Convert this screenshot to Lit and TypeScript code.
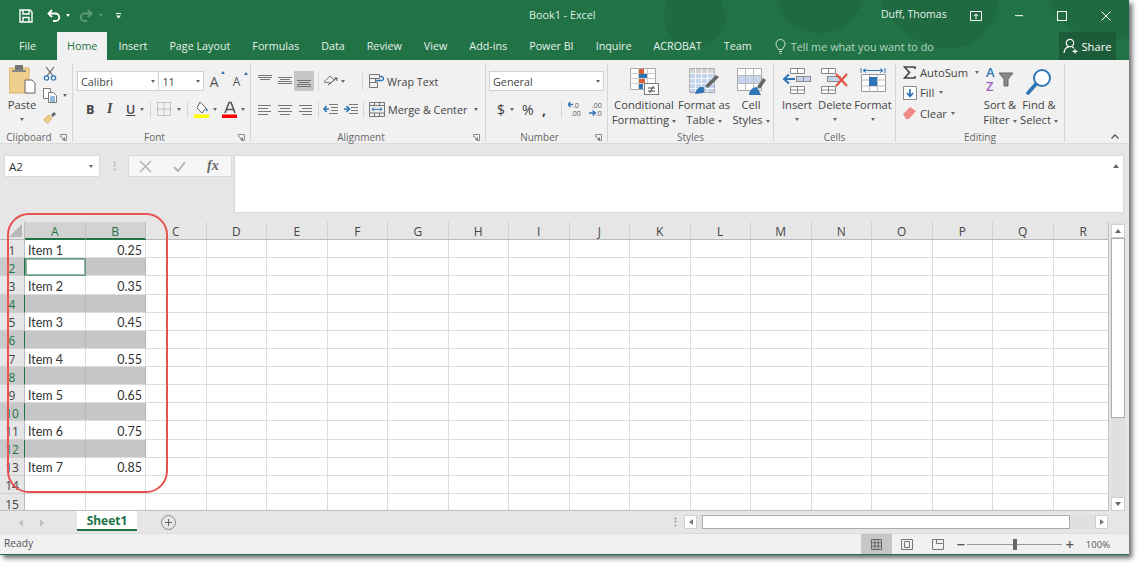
import { LitElement, html, svg, css } from "lit";
import { customElement } from "lit/decorators.js";

const COLS = "ABCDEFGHIJKLMNOPQR".split("");
const ROWS = Array.from({ length: 15 }, (_, i) => i + 1);
const TABS = ["Insert", "Page Layout", "Formulas", "Data", "Review", "View", "Add-ins", "Power BI", "Inquire", "ACROBAT", "Team"];
const VALUES: Record<number, [string, string]> = {
  1: ["Item 1", "0.25"],
  3: ["Item 2", "0.35"],
  5: ["Item 3", "0.45"],
  7: ["Item 4", "0.55"],
  9: ["Item 5", "0.65"],
  11: ["Item 6", "0.75"],
  13: ["Item 7", "0.85"],
};
const isSelected = (r: number) => r % 2 === 0 && r <= 12;

const caret = html`<i class="caret"></i>`;
const launcher = html`<svg class="launcher" width="7" height="7" viewBox="0 0 7 7"><path d="M.5 3V.5H6.5V6.5H3.5" fill="none" stroke="#8a8a8a"/><path d="M1 2.5l3 3M4.5 3.5v2h-2" fill="none" stroke="#666"/></svg>`;

// quick access + window chrome
const icSave = html`<svg width="14" height="14" viewBox="0 0 14 14" fill="none" stroke="#fff" stroke-width="1.4"><path d="M1 1h10l2 2v10H1z"/><path d="M4 1v4h6V1M4 13V8.5h6V13"/></svg>`;
const icUndo = html`<svg width="14" height="13" viewBox="0 0 14 13" fill="none" stroke="#fff" stroke-width="1.8"><path d="M5 1L1.5 4.5 5 8"/><path d="M2 4.5h6.5a3.7 3.7 0 0 1 0 7.5H6"/></svg>`;
const icRedo = html`<svg width="14" height="13" viewBox="0 0 14 13" fill="none" stroke="#5f9a7a" stroke-width="1.8"><path d="M9 1l3.5 3.5L9 8"/><path d="M12 4.5H5.5a3.7 3.7 0 0 0 0 7.5H8"/></svg>`;
const icBulb = html`<svg width="11" height="15" viewBox="0 0 11 15" fill="none" stroke="#cfe3d8"><path d="M3.5 10.5C3 8.5 1 7.5 1 5a4.5 4.5 0 0 1 9 0c0 2.5-2 3.5-2.5 5.5z"/><path d="M4 12.5h3M4.5 14.5h2"/></svg>`;
const icPerson = html`<svg width="16" height="16" viewBox="0 0 16 16" fill="none" stroke="#fff" stroke-width="1.2"><circle cx="7" cy="5" r="3.7"/><path d="M1 15c.3-3.5 2.5-6 5-6.2M9 9c1 .3 1.5.7 2 1.3M12 11v4.5M9.5 13.3h5"/></svg>`;

// clipboard
const icPaste = html`<svg width="27" height="30" viewBox="0 0 27 30"><rect x="0" y="3" width="20" height="25" fill="#f0cf8e" stroke="#d8b36c"/><rect x="6" y="0" width="8" height="6" fill="#777"/><rect x="3" y="5" width="14" height="2" fill="#888"/><path d="M16 15h7l3 3v10H16z" fill="#fff" stroke="#666"/></svg>`;
const icCut = html`<svg width="14" height="15" viewBox="0 0 14 15" fill="none"><path d="M3 1l7 9M11 1L4 10" stroke="#666" stroke-width="1.2"/><circle cx="3.5" cy="12" r="2.2" stroke="#2f75b5" stroke-width="1.2"/><circle cx="10.5" cy="12" r="2.2" stroke="#2f75b5" stroke-width="1.2"/></svg>`;
const icCopy = html`<svg width="14" height="15" viewBox="0 0 14 15" fill="#fff" stroke="#777"><path d="M.5.5h7v10h-7z"/><path d="M5.5 4.5h5l3 3v7h-8z"/><path d="M7 9h5M7 11h5M7 13h5" stroke="#2f75b5"/></svg>`;
const icBrush = html`<svg width="14" height="13" viewBox="0 0 14 13"><path d="M1 8l5-4 3 3-4 5c-2 0-4-2-4-4z" fill="#f0cf8e" stroke="#d8b36c"/><path d="M8 4l3-3 2 2-3 3z" fill="#666"/></svg>`;

// font
const icBorder = html`<svg width="14" height="14" viewBox="0 0 14 14" fill="none" stroke="#999" stroke-dasharray="1 1"><path d="M.5.5h13v13H.5zM7 .5v13M.5 7h13"/></svg>`;
const icFill = html`<svg width="16" height="17" viewBox="0 0 16 17"><path d="M6 1l6 6-4 5-5-5z" fill="#fff" stroke="#666"/><path d="M12 7c1.5 1 2 2 1.8 3.3-1.6 0-2.3-1.3-1.8-3.3z" fill="#2f75b5"/><rect y="13.5" width="15" height="3.5" fill="#ffff00"/></svg>`;
const icColor = html`<svg width="16" height="17" viewBox="0 0 16 17"><path d="M3 12L7 1.5h2L13 12M4.6 8.5h6.8" fill="none" stroke="#555" stroke-width="1.6"/><rect y="13.5" width="15" height="3.5" fill="#f00"/></svg>`;

// alignment
const lines = (rows: [number, number, number][]) => html`<svg width="16" height="14" viewBox="0 0 16 14" stroke="#777">${rows.map(([y, a, b]) => svg`<path d="M${a} ${y + 0.5}H${b}" />`)}</svg>`;
const icTop = lines([[1, 1, 15], [3, 1, 15], [5, 3, 13]]);
const icMid = lines([[3, 1, 15], [5, 3, 13], [7, 1, 15], [9, 1, 15]]);
const icBot = lines([[6, 1, 15], [8, 3, 13], [10, 1, 15], [12, 1, 15]]);
const icLeft = lines([[3, 1, 14], [6, 1, 11], [9, 1, 14], [12, 1, 11]]);
const icCenter = lines([[3, 1, 15], [6, 3, 13], [9, 1, 15], [12, 3, 13]]);
const icRight = lines([[3, 2, 15], [6, 5, 15], [9, 2, 15], [12, 5, 15]]);
const icOrient = html`<svg width="16" height="14" viewBox="0 0 16 14" fill="none"><path d="M1 8l6-6 4 4-3 3z" stroke="#777"/><path d="M5 11l9-7M14 4l-3 0M14 4v3" stroke="#555"/></svg>`;
const icIndL = html`<svg width="15" height="13" viewBox="0 0 15 13" fill="none"><path d="M6 1.5h9M8 4.5h7M8 7.5h7M6 10.5h9" stroke="#777"/><path d="M6 6H1M3.5 3L1 6l2.5 3" stroke="#2f75b5" stroke-width="1.6"/></svg>`;
const icIndR = html`<svg width="15" height="13" viewBox="0 0 15 13" fill="none"><path d="M6 1.5h9M8 4.5h7M8 7.5h7M6 10.5h9" stroke="#777"/><path d="M1 6h5M3.5 3L6.5 6l-3 3" stroke="#2f75b5" stroke-width="1.6"/></svg>`;
const icWrap = html`<svg width="15" height="14" viewBox="0 0 15 14" fill="none" stroke="#777"><path d="M.5.5h10v4H.5zM.5 4.5h6v4h-6zM.5 8.5h8v5h-8z"/><path d="M7 6.5h5.5a1.5 1.5 0 0 0 0-4H11" stroke="#2f75b5" stroke-width="1.3"/></svg>`;
const icMerge = html`<svg width="16" height="15" viewBox="0 0 16 15" fill="none" stroke="#777"><path d="M.5.5h15v14H.5zM5.5.5v3M10.5.5v3M5.5 11v3.5M10.5 11v3.5M.5 3.5h15M.5 11h15"/><path d="M3 7.3h10M5 5.3L3 7.3l2 2M11 5.3l2 2-2 2" stroke="#2f75b5"/></svg>`;

// number
const icDecUp = html`<svg width="13" height="16" viewBox="0 0 13 16"><text x="5" y="6.5" font-size="7" font-family="Open Sans" fill="#555">.0</text><text x="3" y="15" font-size="7" font-family="Open Sans" fill="#555">.00</text><path d="M5 3.5H0M2.5 1L0 3.5 2.5 6" fill="none" stroke="#2f75b5" stroke-width="1.3"/></svg>`;
const icDecDn = html`<svg width="13" height="16" viewBox="0 0 13 16"><text x="3" y="6.5" font-size="7" font-family="Open Sans" fill="#555">.00</text><text x="7" y="15" font-size="7" font-family="Open Sans" fill="#555">.0</text><path d="M0 12h6M3.5 9.5L6.5 12 3.5 14.5" fill="none" stroke="#2f75b5" stroke-width="1.3"/></svg>`;

// styles
const icCond = html`<svg width="29" height="27" viewBox="0 0 29 27"><path d="M.5.5h25v21H.5z" fill="#fff" stroke="#aaa"/><path d="M8.5.5v21M17.5.5v21M.5 5.5h25M.5 10.5h25M.5 15.5h25" stroke="#ccc"/><rect x="9" y="1" width="5" height="5" fill="#d9603b"/><rect x="9" y="6" width="8" height="4" fill="#2f75b5"/><rect x="9" y="11" width="6" height="4" fill="#d9603b"/><rect x="9" y="16" width="4" height="5" fill="#2f75b5"/><rect x="14.5" y="15.5" width="14" height="11" fill="#fff" stroke="#777"/><path d="M18 20h7M18 23h7M23.5 18l-4 7" stroke="#444"/></svg>`;
const icTable = html`<svg width="31" height="27" viewBox="0 0 31 27"><path d="M.5.5h25v24H.5z" fill="#fff" stroke="#aaa"/><rect x="1" y="5" width="24" height="19" fill="#c5d6ec"/><rect x="1" y="1" width="24" height="4" fill="#d5d5d5"/><path d="M6.5.5v24M12.5.5v24M18.5.5v24M.5 5.5h25M.5 10.5h25M.5 15.5h25M.5 20.5h25" stroke="#fff" stroke-opacity=".8"/><path d="M6 26c1-5 5-8 8-7 2 1 2 4 0 6z" fill="#2f75b5"/><path d="M16 18l11-11 3 2-11 11z" fill="#666"/></svg>`;
const icCell = html`<svg width="29" height="27" viewBox="0 0 29 27"><path d="M.5.5h24v22H.5z" fill="#fff" stroke="#aaa"/><rect x="1" y="7" width="23" height="9" fill="#c5d6ec"/><path d="M8.5.5v22M16.5.5v22M.5 7.5h24M.5 15.5h24" stroke="#bbb"/><path d="M12 27c0-5 4-8 8-8l4 8z" fill="#2f75b5"/><path d="M20 19l6-9 3 2-6 9z" fill="#666"/></svg>`;

// cells
const icInsert = html`<svg width="28" height="28" viewBox="0 0 28 28" fill="none"><path d="M7.5 1.5h14v5h-14zM14.5 1.5v5M7.5 19.5h14v7h-14zM14.5 19.5v7M7.5 23h14" fill="#fff" stroke="#888"/><rect x="13.5" y="9.5" width="14" height="5" fill="#c5d6ec" stroke="#888"/><path d="M20.5 9.5v5" stroke="#888"/><path d="M12 12H1M6 7.5L1 12l5 4.5" stroke="#2f75b5" stroke-width="2"/></svg>`;
const icDelete = html`<svg width="28" height="28" viewBox="0 0 28 28" fill="none"><path d="M.5 1.5h14v5H.5zM7.5 1.5v5M.5 19.5h14v7H.5zM7.5 19.5v7M.5 23h14" fill="#fff" stroke="#888"/><rect x="6.5" y="9.5" width="13" height="5" fill="#c5d6ec" stroke="#888"/><path d="M15 7l11 12M26 7L15 19" stroke="#e2533f" stroke-width="2.2"/></svg>`;
const icFormat = html`<svg width="26" height="28" viewBox="0 0 26 28" fill="none"><path d="M1 1v5M25 1v5M3 3.5h20M3 3.5l3-2M3 3.5l3 2M23 3.5l-3-2M23 3.5l-3 2" stroke="#2f75b5"/><path d="M1.5 7.5h24v17h-24z" fill="#fff" stroke="#999"/><path d="M9.5 7.5v17M17.5 7.5v17M1.5 13h24M1.5 19h24" stroke="#bbb"/><rect x="9" y="10" width="8" height="9" fill="#2f75b5"/></svg>`;

// editing
const icSigma = html`<svg width="13" height="13" viewBox="0 0 13 13" fill="none"><path d="M12 3V1H1.5l5 5.5-5 5.5H12v-2" stroke="#444" stroke-width="1.6"/></svg>`;
const icDown = html`<svg width="14" height="14" viewBox="0 0 14 14" fill="#fff"><path d="M.5.5h13v13H.5z" stroke="#888"/><path d="M7 3v6.5M4 7l3 3.5L10 7" fill="none" stroke="#2f75b5" stroke-width="1.7"/></svg>`;
const icEraser = html`<svg width="13" height="12" viewBox="0 0 13 12"><path d="M0 7l7-7 6 4-7 8H3z" fill="#ee8a8a"/></svg>`;
const icSort = html`<svg width="28" height="32" viewBox="0 0 28 32"><text x="0" y="14" font-family="Open Sans" font-size="13" font-weight="600" fill="#2f75b5">A</text><text x="0" y="28" font-family="Open Sans" font-size="13" font-weight="600" fill="#9c5fc0">Z</text><path d="M13 10h14l-5 6v7h-4v-7z" fill="#888" stroke="#666"/></svg>`;
const icFind = html`<svg width="26" height="27" viewBox="0 0 26 27" fill="none"><circle cx="16" cy="10" r="8" stroke="#2f75b5" stroke-width="2" fill="#fff"/><path d="M10 16L2 25" stroke="#2f75b5" stroke-width="3.6" stroke-linecap="round"/></svg>`;

// status bar
const icNormal = html`<svg width="11" height="11" viewBox="0 0 11 11" fill="none" stroke="#666"><path d="M.5.5h10v10H.5zM3.8.5v10M7.2.5v10M.5 3.8h10M.5 7.2h10"/></svg>`;
const icPage = html`<svg width="12" height="11" viewBox="0 0 12 11" fill="none" stroke="#777"><path d="M.5.5h11v10H.5z"/><path d="M3.5 2.5h5v6h-5z"/></svg>`;
const icBreak = html`<svg width="12" height="11" viewBox="0 0 12 11" fill="none" stroke="#777"><path d="M.5.5h11v10H.5zM4.5.5v4h6"/></svg>`;

@customElement("app-root")
export class AppRoot extends LitElement {
  static override styles = css`
    :host {
      display: block;
      position: relative;
      width: 1139px;
      height: 566px;
      overflow: hidden;
      background: #fff;
      font-family: "Open Sans", sans-serif;
      font-size: 11.2px;
      color: #444;
    }
    svg { display: block; flex: none; }
    .win {
      width: 1129px;
      height: 555px;
      display: flex;
      flex-direction: column;
      background: #e6e6e6;
      box-shadow: 3px 3px 5px #666;
      border-bottom: 1px solid #217346;
      box-sizing: border-box;
    }
    .caret {
      display: inline-block;
      flex: none;
      width: 0;
      height: 0;
      border: 2.5px solid transparent;
      border-top: 3px solid #666;
      border-bottom: 0;
    }

    /* title + tabs */
    .head { position: relative; background: #217346; height: 60px; color: #fff; }
    .blobs { position: absolute; left: 0; top: 0; }
    .title { position: relative; height: 31px; display: flex; align-items: center; padding-left: 19px; }
    .title .caret { border-top-color: #fff; }
    .title .dim { border-top-color: #5f9a7a; margin-left: 6px; }
    .doc { position: absolute; left: 529px; top: 7px; font-size: 10.8px; color: #dfece5; }
    .who { position: absolute; left: 881px; top: 7px; font-size: 10.5px; color: #e5f0ea; }
    .win-btns { margin-left: auto; display: flex; align-items: center; padding-right: 18px; gap: 34px; }
    .win-btns .display { margin-right: -4px; }
    .tabs { position: relative; height: 29px; display: flex; align-items: stretch; padding-top: 1px; box-sizing: border-box; font-size: 10.75px; }
    .tab { padding: 0 11px; display: flex; align-items: center; color: #e6f0ea; white-space: nowrap; }
    .tab.file { margin-left: 8px; margin-right: 10px; }
    .tab.home { background: #f1f1f1; color: #217346; padding: 0 10px; }
    .tell { display: flex; align-items: center; gap: 5px; margin-left: 12px; color: #b7d3c4; font-size: 10.9px; }
    .share {
      margin-left: auto;
      margin-right: 13px;
      width: 57px;
      display: flex;
      align-items: center;
      justify-content: center;
      gap: 2px;
      background: #1c5c39;
      color: #fff;
      font-size: 11.2px;
    }

    /* ribbon */
    .ribbon { position: relative; height: 84px; background: #f1f1f1; display: flex; padding-top: 3px; box-sizing: border-box; border-bottom: 1px solid #dcdcdc; }
    .group { position: relative; display: flex; flex-direction: column; border-right: 1px solid #d6d6d6; box-sizing: border-box; height: 79px; flex: none; }
    .body { flex: 1; display: flex; min-height: 0; }
    .lbl { flex: none; height: 13px; line-height: 13px; margin-bottom: -1px; text-align: center; color: #666; font-size: 10px; position: relative; top: 1px; }
    .lbl.l { padding-right: 14px; }
    .launcher { position: absolute; right: 5px; bottom: 1px; }
    .stack { display: flex; flex-direction: column; padding-top: 8px; gap: 8px; }
    .row { display: flex; align-items: center; height: 20px; font-size: 10.8px; }
    .vsep { width: 1px; height: 17px; background: #d6d6d6; flex: none; }
    .big { display: flex; flex-direction: column; align-items: center; flex: none; text-align: center; line-height: 15px; white-space: nowrap; }
    .big .pic { height: 34px; flex: none; display: flex; align-items: flex-end; justify-content: center; padding-bottom: 2px; box-sizing: border-box; }
    .big .caret { margin-left: 3px; vertical-align: middle; }
    .big .alone { margin-left: 0; display: block; margin-top: 6px; }
    .combo { height: 20px; background: #fff; border: 1px solid #d0d0d0; box-sizing: border-box; display: flex; align-items: center; padding: 0 3px; justify-content: space-between; }

    .clip-left { width: 40px; margin-left: 2px; }
    .clip-right { display: flex; flex-direction: column; padding-top: 3px; gap: 7px; margin-left: 1px; }
    .clip-right .r { display: flex; align-items: center; gap: 6px; height: 15px; }
    .b { font-weight: 700; }
    .i { font-style: italic; font-family: "Liberation Serif", serif; font-size: 14px; font-weight: 700; }
    .u { text-decoration: underline; font-weight: 600; }
    .name { width: 86px; }
    .size { width: 46px; border-left: 0; }
    .grow { font-size: 14px; margin-left: 6px; width: 18px; position: relative; color: #555; }
    .grow sup { position: absolute; top: -1px; right: 2px; width: 0; height: 0; border: 2px solid transparent; border-bottom: 3px solid #2f75b5; border-top: 0; }
    .shrink { font-size: 12px; }
    .active { background: #c6c6c6; width: 20px; height: 20px; display: flex; align-items: center; justify-content: center; }

    .edit-rows { display: flex; flex-direction: column; width: 85px; padding-left: 7px; box-sizing: border-box; margin-top: -1px; }
    .edit-rows .e { height: 20.5px; display: flex; align-items: center; }
    .edit-rows .ico { width: 17px; flex: none; }
    .collapse { position: absolute; right: 10px; bottom: 4px; }

    /* formula bar */
    .fbar { height: 78px; display: flex; padding-top: 11px; box-sizing: border-box; align-items: flex-start; }
    .namebox { margin-left: 4px; width: 96px; height: 22px; background: #fff; border: 1px solid #dadada; box-sizing: border-box; display: flex; align-items: center; justify-content: space-between; padding: 0 6px 0 4px; font-size: 11.5px; color: #333; }
    .grip { width: 28px; text-align: center; color: #aaa; line-height: 22px; font-weight: 700; }
    .fbtns { width: 104px; height: 22px; background: #f6f6f6; border: 1px solid #dadada; box-sizing: border-box; display: flex; align-items: center; gap: 21px; padding-left: 10px; }
    .fx { font-family: "Liberation Serif", serif; font-style: italic; font-weight: 700; font-size: 14px; color: #666; }
    .input { position: relative; margin-left: 2px; width: 890px; height: 58px; background: #fff; border: 1px solid #d9d9d9; box-sizing: border-box; }
    .input .caret { position: absolute; right: 4px; top: 8px; border-top: 0; border-bottom: 4px solid #666; border-left-width: 3.5px; border-right-width: 3.5px; }

    /* sheet: rows and columns keep their size, the last ones get clipped */
    .sheet { position: relative; display: flex; height: 289px; }
    .cells {
      width: 1109px;
      height: 289px;
      overflow: hidden;
      display: grid;
      grid-template-columns: 25px repeat(18, 60.5px);
      grid-template-rows: 18.2px repeat(15, 18.14px);
      background: #fff;
      font-family: Lato, sans-serif;
      font-size: 12.5px;
      color: #333;
      border-right: 1px solid #c0c0c0;
      border-bottom: 1px solid #c0c0c0;
      box-sizing: border-box;
    }
    .corner { background: #e6e6e6; position: relative; border-right: 1px solid #bbb; border-bottom: 1px solid #bbb; }
    .corner::after { content: ""; position: absolute; right: 2px; bottom: 2px; width: 0; height: 0; border-style: solid; border-width: 0 0 13px 13px; border-color: transparent transparent #b7b7b7 transparent; }
    .ch { background: #e6e6e6; border-right: 1px solid #d0d0d0; border-bottom: 1px solid #bbb; display: flex; align-items: center; justify-content: center; font-family: "Open Sans", sans-serif; font-size: 12px; color: #444; padding-top: 2px; box-sizing: border-box; }
    .ch.on { background: #d2d2d2; color: #217346; border-bottom: 2px solid #217346; border-right-color: #c0c0c0; }
    .rh { background: #e6e6e6; border-bottom: 1px solid #d0d0d0; border-right: 1px solid #bbb; display: flex; align-items: center; justify-content: center; font-family: "Open Sans", sans-serif; font-size: 12px; color: #444; padding-top: 3px; box-sizing: border-box; }
    .rh.on { background: #c9c9c9; color: #217346; border-right: 1px solid #217346; }
    .c { border-right: 1px solid #dcdcdc; border-bottom: 1px solid #dcdcdc; display: flex; align-items: center; padding: 3px 3px 0; min-width: 0; white-space: nowrap; box-sizing: border-box; }
    .c.num { justify-content: flex-end; }
    .c.sel { background: #c6c6c6; border-right-color: #b8b8b8; border-bottom-color: #dcdcdc; }
    .c.cur { background: #fff; border: 2px solid #8fb5a2; outline: 1px solid #6f9a85; outline-offset: -1px; }
    .vbar { width: 14px; margin-left: 2px; display: flex; flex-direction: column; background: #e0e0e0; height: 289px; box-sizing: border-box; padding-top: 2px; }
    .sb-btn { height: 14px; flex: none; background: #fff; border: 1px solid #d0d0d0; box-sizing: border-box; display: flex; align-items: center; justify-content: center; }
    .thumb { height: 180px; flex: none; background: #fff; border: 1px solid #ababab; box-sizing: border-box; }
    .up { width: 0; height: 0; border: 3.5px solid transparent; border-bottom: 4px solid #666; border-top: 0; }
    .down { width: 0; height: 0; border: 3.5px solid transparent; border-top: 4px solid #666; border-bottom: 0; }
    .spacer { flex: 1; }

    /* tabs under the sheet */
    .strip { height: 22px; display: flex; align-items: flex-start; position: relative; }
    .nav { width: 77px; display: flex; gap: 17px; padding: 8px 0 0 19px; box-sizing: border-box; flex: none; }
    .navl { width: 0; height: 0; border: 4px solid transparent; border-right: 4px solid #c2c2c2; border-left: 0; }
    .navr { width: 0; height: 0; border: 4px solid transparent; border-left: 4px solid #c2c2c2; border-right: 0; }
    .sheet-tab { width: 60px; height: 20px; background: #fff; border-bottom: 2px solid #217346; box-sizing: border-box; text-align: center; line-height: 19px; font-size: 12px; font-weight: 700; color: #217346; }
    .plus { width: 15px; height: 15px; border: 1px solid #8a8a8a; border-radius: 50%; margin: 4px 0 0 24px; position: relative; flex: none; box-sizing: border-box; }
    .plus::before { content: ""; position: absolute; left: 3px; right: 3px; top: 6px; height: 1px; background: #666; }
    .plus::after { content: ""; position: absolute; top: 3px; bottom: 3px; left: 6px; width: 1px; background: #666; }
    .hgrip { margin-left: 493px; color: #888; font-weight: 700; line-height: 22px; width: 12px; text-align: center; flex: none; }
    .hbar { margin: 4px 0 0 3px; width: 424px; height: 14px; background: #e0e0e0; display: flex; flex: none; }
    .hbar .sb-btn { width: 13px; height: 14px; }
    .hthumb { margin-left: 5px; width: 368px; height: 14px; background: #fff; border: 1px solid #ababab; box-sizing: border-box; flex: none; }
    .left { width: 0; height: 0; border: 3.5px solid transparent; border-right: 4px solid #777; border-left: 0; }
    .right { width: 0; height: 0; border: 3.5px solid transparent; border-left: 4px solid #777; border-right: 0; }

    /* status bar */
    .status { flex: 1; background: #f1f1f1; display: flex; align-items: center; padding-left: 4px; color: #555; font-size: 10.2px; border-top: 1px solid #dcdcdc; }
    .status .ready { margin-top: -3px; }
    .views { margin-left: auto; display: flex; align-items: stretch; height: 100%; }
    .view { width: 31px; display: flex; align-items: center; justify-content: center; }
    .view.on { background: #c6c6c6; }
    .zoom { display: flex; align-items: center; margin: 0 19px 0 1px; }
    .slider { width: 95px; height: 1px; background: #999; position: relative; }
    .slider i { position: absolute; left: 46px; top: -5px; width: 4px; height: 11px; background: #666; }
    .pm { font-size: 15px; width: 12px; text-align: center; color: #555; font-weight: 600; line-height: 15px; }
    .pm.add { margin-left: 2px; }
    .pct { margin-left: 10px; font-size: 9.5px; }

    /* the callout drawn on the screenshot */
    .callout { position: absolute; left: 7px; top: 213px; width: 161px; height: 280px; border: 2px solid #e8524f; border-radius: 22px; box-sizing: border-box; pointer-events: none; }
  `;

  private big(width: number, pic: unknown, lines: string[], arrow = true) {
    const single = lines.length === 1;
    return html`<div class="big" style="width:${width}px">
      <div class="pic">${pic}</div>
      ${lines.map((l, i) => html`<div>${l}${arrow && !single && i === lines.length - 1 ? caret : ""}</div>`)}
      ${single && arrow ? html`<i class="caret alone"></i>` : ""}
    </div>`;
  }

  private renderHead() {
    return html`<div class="head">
      <svg class="blobs" width="1129" height="60" viewBox="0 0 1129 60" fill="#1f6a41">
        <path d="M668 0h52c8 12 8 30-4 38-8 10-30 12-38 6-12-10-18-30-10-44z" />
        <path d="M775 0h88c-6 14-14 28-32 32-24 4-44-6-50-20z" />
        <path d="M880 0h118c0 22-18 44-42 48-30 4-66-20-76-48z" />
        <path d="M1050 0h79v38c-28 6-70-2-79-38z" />
      </svg>
      <div class="title">
        ${icSave}
        <span style="width:14px"></span>${icUndo}
        <span style="width:5px"></span>${caret}
        <span style="width:9px"></span>${icRedo}
        <i class="caret dim"></i>
        <span style="width:13px"></span>
        <svg width="5" height="6" viewBox="0 0 5 6" fill="#fff"><path d="M0 0h5v1H0zM0 2.5h5L2.5 5.5z" /></svg>
        <span class="doc">Book1 - Excel</span>
        <span class="who">Duff, Thomas</span>
        <div class="win-btns">
          <svg class="display" width="13" height="10" viewBox="0 0 13 10" fill="none" stroke="#fff"><path d="M.5.5h11v9H.5zM6 8V3M4 5l2-2 2 2" /></svg>
          <svg width="8" height="2" viewBox="0 0 8 2" fill="#dfece5" style="margin-left:2px"><rect width="8" height="1.2" /></svg>
          <svg width="10" height="10" viewBox="0 0 10 10" fill="none" stroke="#fff"><rect x=".5" y=".5" width="9" height="9" /></svg>
          <svg width="10" height="10" viewBox="0 0 10 10" fill="none" stroke="#fff"><path d="M.5.5l9 9M9.5.5l-9 9" /></svg>
        </div>
      </div>
      <div class="tabs">
        <div class="tab file">File</div>
        <div class="tab home">Home</div>
        ${TABS.map((t) => html`<div class="tab">${t}</div>`)}
        <div class="tell">${icBulb}<span>Tell me what you want to do</span></div>
        <div class="share">${icPerson}<span>Share</span></div>
      </div>
    </div>`;
  }

  private renderRibbon() {
    return html`<div class="ribbon">
      <div class="group" style="width:73px">
        <div class="body">
          <div class="big clip-left">
            <div class="pic">${icPaste}</div>
            <div>Paste</div>
            <i class="caret alone"></i>
          </div>
          <div class="clip-right">
            <div class="r">${icCut}</div>
            <div class="r">${icCopy}${caret}</div>
            <div class="r">${icBrush}</div>
          </div>
        </div>
        <div class="lbl l">Clipboard</div>${launcher}
      </div>

      <div class="group" style="width:178px">
        <div class="body stack" style="padding-left:4px">
          <div class="row">
            <div class="combo name"><span>Calibri</span>${caret}</div>
            <div class="combo size"><span>11</span>${caret}</div>
            <span class="grow">A<sup></sup></span>
            <span class="grow shrink">A<sup></sup></span>
          </div>
          <div class="row" style="padding-left:9px">
            <span class="b" style="font-size:12.5px;width:21px">B</span>
            <span class="i" style="width:19px">I</span>
            <span class="u" style="font-size:12.5px;width:14px">U</span>
            ${caret}
            <span class="vsep" style="margin:0 6px"></span>
            ${icBorder}
            <span style="width:6px"></span>${caret}
            <span class="vsep" style="margin:0 6px"></span>
            ${icFill}
            <span style="width:3px"></span>${caret}
            <span style="width:5px"></span>${icColor}
            <span style="width:3px"></span>${caret}
          </div>
        </div>
        <div class="lbl l">Font</div>${launcher}
      </div>

      <div class="group" style="width:235px">
        <div class="body stack" style="padding-left:6px">
          <div class="row">
            <div style="width:20px">${icTop}</div>
            <div style="width:17px">${icMid}</div>
            <div class="active">${icBot}</div>
            <span class="vsep" style="margin:0 4px"></span>
            ${icOrient}<span style="width:2px"></span>${caret}
            <span class="vsep" style="margin:0 6px 0 17px"></span>
            ${icWrap}<span style="margin-left:3px">Wrap Text</span>
          </div>
          <div class="row">
            <div style="width:20px">${icLeft}</div>
            <div style="width:20px">${icCenter}</div>
            <div style="width:17px">${icRight}</div>
            <span class="vsep" style="margin:0 4px"></span>
            ${icIndL}<span style="width:5px"></span>${icIndR}
            <span class="vsep" style="margin:0 5px"></span>
            ${icMerge}<span style="margin:0 7px 0 3px">Merge &amp; Center</span>${caret}
          </div>
        </div>
        <div class="lbl l">Alignment</div>${launcher}
      </div>

      <div class="group" style="width:122px">
        <div class="body stack" style="padding-left:3px">
          <div class="row"><div class="combo" style="width:115px"><span>General</span>${caret}</div></div>
          <div class="row" style="padding-left:8px">
            <span style="font-size:14px;width:13px">$</span>${caret}
            <span style="font-size:14px;margin-left:8px;width:20px">%</span>
            <span class="b" style="font-size:14px;width:13px">,</span>
            <span class="vsep" style="margin:0 6px"></span>
            ${icDecUp}<span style="width:8px"></span>${icDecDn}
          </div>
        </div>
        <div class="lbl l">Number</div>${launcher}
      </div>

      <div class="group" style="width:166px">
        <div class="body" style="padding-left:4px">
          ${this.big(64, icCond, ["Conditional", "Formatting"])}
          ${this.big(56, icTable, ["Format as", "Table"])}
          ${this.big(38, icCell, ["Cell", "Styles"])}
        </div>
        <div class="lbl">Styles</div>
      </div>

      <div class="group" style="width:122px">
        <div class="body" style="padding-left:4px">
          ${this.big(38, icInsert, ["Insert"])}
          ${this.big(38, icDelete, ["Delete"])}
          ${this.big(38, icFormat, ["Format"])}
        </div>
        <div class="lbl">Cells</div>
      </div>

      <div class="group" style="width:169px">
        <div class="body">
          <div class="edit-rows">
            <div class="e"><span class="ico">${icSigma}</span>AutoSum<span style="width:7px"></span>${caret}</div>
            <div class="e"><span class="ico">${icDown}</span>Fill<span style="width:5px"></span>${caret}</div>
            <div class="e"><span class="ico">${icEraser}</span>Clear<span style="width:4px"></span>${caret}</div>
          </div>
          ${this.big(38, icSort, ["Sort &", "Filter"])}
          <span style="width:1px"></span>
          ${this.big(38, icFind, ["Find &", "Select"])}
        </div>
        <div class="lbl">Editing</div>
      </div>

      <svg class="collapse" width="8" height="5" viewBox="0 0 8 5" fill="none" stroke="#555" stroke-width="1.3"><path d="M.5 4.5L4 1l3.5 3.5" /></svg>
    </div>`;
  }

  private renderCell(r: number, col: number) {
    const v = VALUES[r];
    const sel = isSelected(r);
    if (sel && r === 2 && col === 0) return html`<div class="c cur"></div>`;
    const cls = `c${col === 1 ? " num" : ""}${sel && col < 2 ? " sel" : ""}`;
    return html`<div class=${cls}>${v && col < 2 ? v[col] : ""}</div>`;
  }

  private renderSheet() {
    return html`<div class="sheet">
      <div class="cells">
        <div class="corner"></div>
        ${COLS.map((c, i) => html`<div class="ch ${i < 2 ? "on" : ""}">${c}</div>`)}
        ${ROWS.map(
          (r) => html`<div class="rh ${isSelected(r) ? "on" : ""}">${r}</div>
            ${COLS.map((_, i) => this.renderCell(r, i))}`
        )}
      </div>
      <div class="vbar">
        <div class="sb-btn"><i class="up"></i></div>
        <div class="thumb"></div>
        <div class="spacer"></div>
        <div class="sb-btn"><i class="down"></i></div>
      </div>
    </div>`;
  }

  override render() {
    return html`<div class="win">
        ${this.renderHead()} ${this.renderRibbon()}
        <div class="fbar">
          <div class="namebox"><span>A2</span>${caret}</div>
          <div class="grip">⋮</div>
          <div class="fbtns">
            <svg width="13" height="13" viewBox="0 0 13 13" fill="none" stroke="#b5b5b5" stroke-width="1.5"><path d="M1 1l11 11M12 1L1 12" /></svg>
            <svg width="13" height="11" viewBox="0 0 13 11" fill="none" stroke="#b5b5b5" stroke-width="2"><path d="M1 6l4 4 7-9" /></svg>
            <span class="fx">fx</span>
          </div>
          <div class="input"><i class="caret"></i></div>
        </div>
        ${this.renderSheet()}
        <div class="strip">
          <div class="nav"><i class="navl"></i><i class="navr"></i></div>
          <div class="sheet-tab">Sheet1</div>
          <div class="plus"></div>
          <div class="hgrip">⋮</div>
          <div class="hbar">
            <div class="sb-btn"><i class="left"></i></div>
            <div class="hthumb"></div>
            <div class="spacer"></div>
            <div class="sb-btn"><i class="right"></i></div>
          </div>
        </div>
        <div class="status">
          <span class="ready">Ready</span>
          <div class="views">
            <div class="view on">${icNormal}</div>
            <div class="view">${icPage}</div>
            <div class="view">${icBreak}</div>
            <div class="zoom">
              <span class="pm">−</span>
              <div class="slider"><i></i></div>
              <span class="pm add">+</span>
              <span class="pct">100%</span>
            </div>
          </div>
        </div>
      </div>
      <div class="callout"></div>`;
  }
}
